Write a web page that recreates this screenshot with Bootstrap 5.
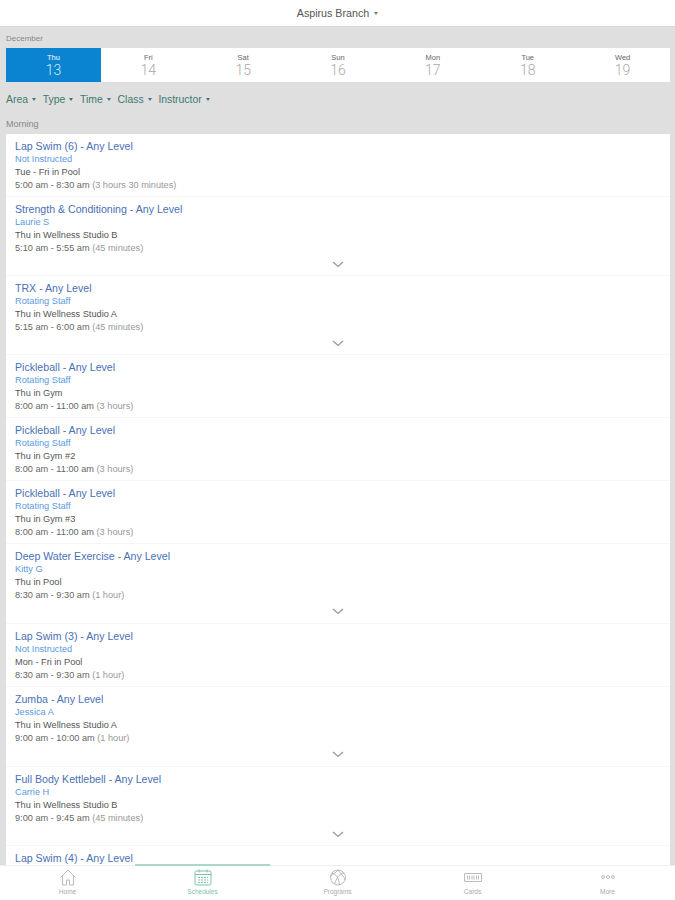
<!DOCTYPE html>
<html lang="en">

<head>
    <meta charset="UTF-8">
    <meta name="viewport" content="width=device-width, initial-scale=1.0">
    <title>Schedules - Aspirus Branch</title>
    <link rel="stylesheet" href="https://cdn.jsdelivr.net/npm/bootstrap@5.3.0/dist/css/bootstrap.min.css">
    <style>
        html, body {
            height: 900px;
            overflow: hidden;
        }

        body {
            font-family: "Liberation Sans", Arial, sans-serif;
            background-color: #dfdfdf;
            color: #333;
        }

        .app-page {
            height: 900px;
        }

        .top-bar {
            height: 27px;
            flex: none;
            font-size: 10.7px;
            color: #555;
            border-bottom: 1px solid #d8d8d8;
        }

        .caret-down {
            display: inline-block;
            width: 0;
            height: 0;
            border-left: 2px solid transparent;
            border-right: 2px solid transparent;
            border-top: 3px solid currentColor;
            vertical-align: middle;
        }

        .top-bar .caret-down {
            margin-left: 5px;
            color: #777;
        }

        .grey-label {
            font-size: 9px;
            line-height: 11px;
            color: #888;
            padding-left: 6px;
        }

        .month-label {
            margin-top: 6px;
            height: 15px;
            flex: none;
            font-size: 8px;
        }

        .day-strip {
            height: 34px;
            margin: 0 5px 0 6px;
            flex: none;
        }

        .day-cell {
            flex: 1 1 0;
            text-align: center;
            color: #aaa;
        }

        .day-cell .day-name {
            font-size: 7.5px;
            line-height: 9px;
            padding-top: 5px;
            color: #666;
        }

        .day-cell .day-num {
            font-family: Roboto, "Liberation Sans", sans-serif;
            font-size: 14px;
            line-height: 16px;
            font-weight: 300;
        }

        .day-cell.is-today {
            background-color: #0a84d0;
            color: #d8ecf9;
        }

        .day-cell.is-today .day-name {
            color: #fff;
        }

        .filter-row {
            height: 35px;
            flex: none;
            padding-left: 6px;
            font-size: 10.4px;
            color: #3d7a70;
            gap: 6.8px;
        }

        .filter-row .caret-down {
            margin-left: 4px;
        }

        .section-label {
            height: 17px;
            padding-top: 2px;
            flex: none;
        }

        .class-list {
            margin: 0 5px 0 6px;
            overflow: hidden;
            min-height: 0;
        }

        .class-item {
            height: 63px;
            padding: 6px 9px 0;
            border-bottom: 1px solid #f6f6f6;
            flex: none;
        }

        .class-item.has-more {
            height: 79px;
        }

        .class-item.has-more-tall {
            height: 80px;
        }

        .class-item .chevron {
            position: absolute;
            right: 326px;
            top: 64px;
        }

        .class-title {
            font-size: 10.6px;
            line-height: 13px;
            color: #4a70b5;
        }

        .class-staff {
            font-size: 9.2px;
            line-height: 13px;
            color: #5a9ae0;
        }

        .class-where {
            font-size: 9.2px;
            line-height: 13px;
            color: #555;
        }

        .class-when {
            font-size: 9.2px;
            line-height: 13px;
            color: #666;
        }

        .class-when span {
            color: #999;
        }

        .tab-bar {
            height: 35px;
            flex: none;
            background-color: #fff;
            border-top: 1px solid #eee;
            z-index: 1;
        }

        .tab-item {
            flex: 1 1 0;
            text-align: center;
            font-size: 6.5px;
            line-height: 8px;
            color: #aaa;
            padding-top: 3px;
        }

        .tab-item svg {
            display: block;
            margin: 0 auto 2px;
        }

        .tab-item.is-active {
            color: #7fc2aa;
        }

        .tab-item.is-active::before {
            content: "";
            position: absolute;
            left: 0;
            right: 0;
            top: -2px;
            height: 2px;
            background-color: #a9d8c6;
        }
    </style>
</head>

<body>
    <div class="app-page d-flex flex-column">
        <!-- Branch picker -->
        <div class="top-bar bg-white d-flex align-items-center justify-content-center">
            Aspirus Branch<span class="caret-down"></span>
        </div>

        <div class="grey-label month-label">December</div>

        <!-- Day strip -->
        <div class="day-strip bg-white d-flex" id="days"></div>

        <!-- Filters -->
        <div class="filter-row d-flex align-items-center">
            <div>Area<span class="caret-down"></span></div>
            <div>Type<span class="caret-down"></span></div>
            <div>Time<span class="caret-down"></span></div>
            <div>Class<span class="caret-down"></span></div>
            <div>Instructor<span class="caret-down"></span></div>
        </div>

        <div class="grey-label section-label">Morning</div>

        <!-- Class list -->
        <div class="class-list bg-white flex-grow-1 d-flex flex-column" id="classes"></div>

        <!-- Tabs -->
        <div class="tab-bar d-flex">
            <div class="tab-item position-relative">
                <svg width="18" height="17" viewBox="0 0 18 17" fill="none" stroke="#aaa" stroke-width="0.8">
                    <path d="M1.500 8.500 9 1l7.500 7.500M3.500 7v9h4v-5h3v5h4V7"/>
                </svg>
                Home
            </div>
            <div class="tab-item is-active position-relative">
                <svg width="18" height="17" viewBox="0 0 18 17" fill="none" stroke="#7fc2aa" stroke-width="1">
                    <rect x="1" y="2" width="16" height="14" rx="1.500"/>
                    <path d="M1 5.500h16M5 .5v3M13 .5v3"/>
                    <path d="M4 8.500h10M4 11h10M4 13.500h10" stroke-dasharray="2 1"/>
                </svg>
                Schedules
            </div>
            <div class="tab-item position-relative">
                <svg width="18" height="17" viewBox="0 0 18 17" fill="none" stroke="#aaa" stroke-width="0.8">
                    <circle cx="9" cy="8.500" r="7.500"/>
                    <path d="M3 4c4 1 7 5 7.500 12M15 4c-3 0-7 3-9.500 11M9 1c-2 3-6 4-7.500 6M9 1c2 3 6 6 7 10"/>
                </svg>
                Programs
            </div>
            <div class="tab-item position-relative">
                <svg width="18" height="17" viewBox="0 0 18 17" fill="none" stroke="#aaa" stroke-width="0.8">
                    <rect x="0.500" y="4.500" width="17" height="8" rx="0.500"/>
                    <path d="M3.500 6.500v4M5.500 6.500v4M8 6.500v4M10 6.500v4M12.500 6.500v4M14.500 6.500v4"/>
                </svg>
                Cards
            </div>
            <div class="tab-item position-relative">
                <svg width="18" height="17" viewBox="0 0 18 17" fill="none" stroke="#aaa" stroke-width="0.8">
                    <circle cx="4" cy="8" r="1.500"/>
                    <circle cx="9" cy="8" r="1.500"/>
                    <circle cx="14" cy="8" r="1.500"/>
                </svg>
                More
            </div>
        </div>
    </div>

    <script src="https://cdn.jsdelivr.net/npm/bootstrap@5.3.0/dist/js/bootstrap.bundle.min.js"></script>
    <script>
        const days = [['Thu', 13], ['Fri', 14], ['Sat', 15], ['Sun', 16], ['Mon', 17], ['Tue', 18], ['Wed', 19]];
        const classes = [
            ['Lap Swim (6) - Any Level', 'Not Instructed', 'Tue - Fri in Pool', '5:00 am - 8:30 am', '(3 hours 30 minutes)', ''],
            ['Strength & Conditioning - Any Level', 'Laurie S', 'Thu in Wellness Studio B', '5:10 am - 5:55 am', '(45 minutes)', 'has-more'],
            ['TRX - Any Level', 'Rotating Staff', 'Thu in Wellness Studio A', '5:15 am - 6:00 am', '(45 minutes)', 'has-more'],
            ['Pickleball - Any Level', 'Rotating Staff', 'Thu in Gym', '8:00 am - 11:00 am', '(3 hours)', ''],
            ['Pickleball - Any Level', 'Rotating Staff', 'Thu in Gym #2', '8:00 am - 11:00 am', '(3 hours)', ''],
            ['Pickleball - Any Level', 'Rotating Staff', 'Thu in Gym #3', '8:00 am - 11:00 am', '(3 hours)', ''],
            ['Deep Water Exercise - Any Level', 'Kitty G', 'Thu in Pool', '8:30 am - 9:30 am', '(1 hour)', 'has-more-tall'],
            ['Lap Swim (3) - Any Level', 'Not Instructed', 'Mon - Fri in Pool', '8:30 am - 9:30 am', '(1 hour)', ''],
            ['Zumba - Any Level', 'Jessica A', 'Thu in Wellness Studio A', '9:00 am - 10:00 am', '(1 hour)', 'has-more-tall'],
            ['Full Body Kettlebell - Any Level', 'Carrie H', 'Thu in Wellness Studio B', '9:00 am - 9:45 am', '(45 minutes)', 'has-more']
        ];
        const chevron = '<svg class="chevron" width="12" height="7" viewBox="0 0 12 7" fill="none" stroke="#999" stroke-width="1.300"><path d="M1 1l5 4.500L11 1"/></svg>';

        document.getElementById('days').innerHTML = days.map((d, i) =>
            `<div class="day-cell${i === 0 ? ' is-today' : ''}"><div class="day-name">${d[0]}</div><div class="day-num">${d[1]}</div></div>`
        ).join('');

        // last row only shows its title above the tab bar
        document.getElementById('classes').innerHTML = classes.map(c =>
            `<div class="class-item position-relative ${c[5]}">
                <div class="class-title">${c[0]}</div>
                <div class="class-staff">${c[1]}</div>
                <div class="class-where">${c[2]}</div>
                <div class="class-when">${c[3]} <span>${c[4]}</span></div>
                ${c[5] ? chevron : ''}
            </div>`
        ).join('') + '<div class="class-item"><div class="class-title">Lap Swim (4) - Any Level</div></div>';
    </script>
</body>
</html>
